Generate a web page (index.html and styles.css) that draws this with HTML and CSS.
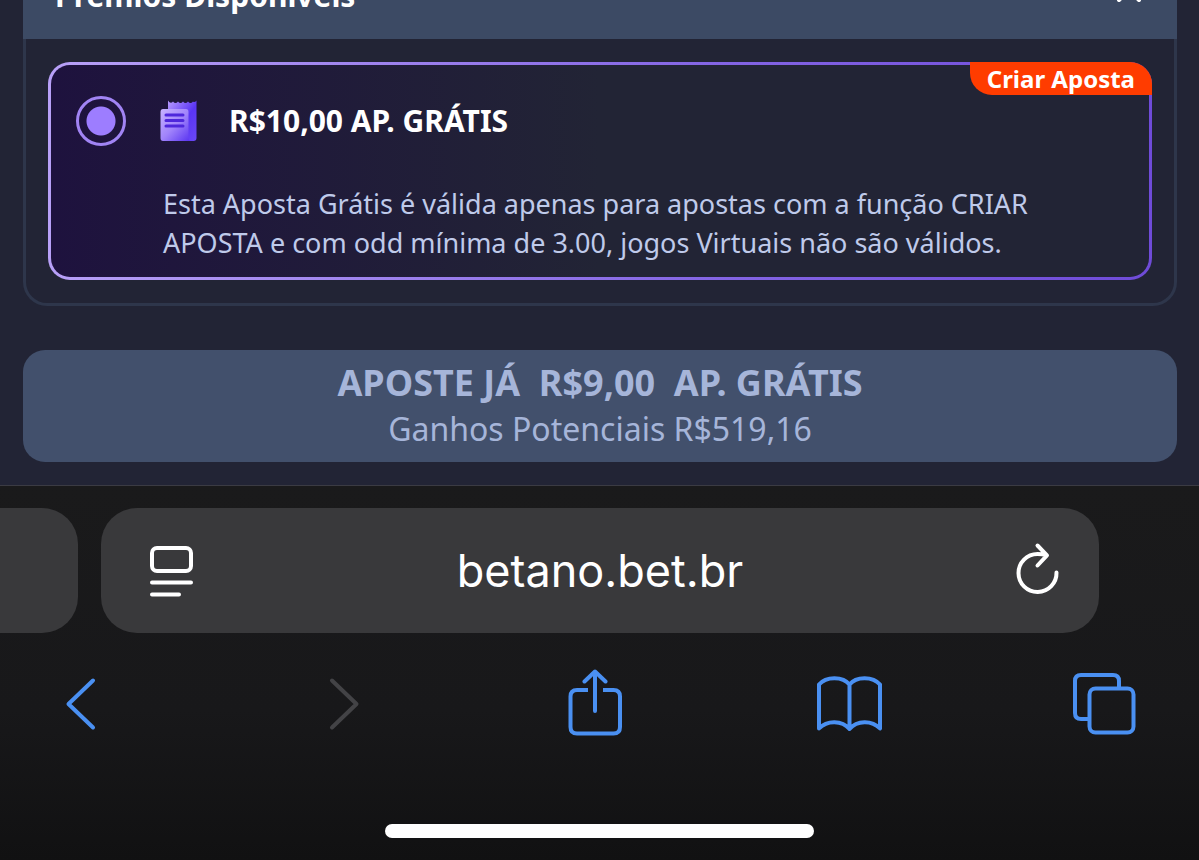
FILE: index.html
```html
<!DOCTYPE html>
<html lang="pt-BR">
<head>
<meta charset="utf-8">
<meta name="viewport" content="width=device-width, initial-scale=1">
<title>Betano</title>
<link rel="stylesheet" href="styles.css">
</head>
<body>
<main class="betslip">
  <section class="rewards">
    <header class="rewards-header">
      <h2 class="rewards-title">Prêmios Disponíveis</h2>
      <button class="collapse" type="button" aria-label="Recolher">
        <svg width="30" height="20" viewBox="0 0 30 20"><path d="M4 14 L14 4 L24 14"/></svg>
      </button>
    </header>
    <div class="rewards-body">
      <div class="reward">
        <span class="reward-tag">Criar Aposta</span>
        <div class="reward-top">
          <input class="reward-radio" type="radio" name="reward" id="reward-1" checked>
          <svg class="reward-icon" width="38" height="42" viewBox="0 0 38 42" aria-hidden="true">
            <defs>
              <linearGradient id="back" x1="0" y1="0" x2="1" y2="1"><stop offset="0" stop-color="#b89bff"/><stop offset=".55" stop-color="#5a35f4"/><stop offset="1" stop-color="#6a48f5"/></linearGradient>
              <linearGradient id="front" x1="0" y1="0" x2="1" y2="1"><stop offset="0" stop-color="#c7b3ff"/><stop offset=".5" stop-color="#a184fb"/><stop offset="1" stop-color="#5630f0"/></linearGradient>
            </defs>
            <path fill="url(#back)" d="M8 .5 Q10.500 4.500 13 1.500 Q15.500 4.500 18 1.500 Q20.500 4.500 23 1.500 Q25.500 4.500 28 1.500 Q30.500 4.500 33 1.500 Q34.500 3 36.500 .5 V38 Q36.500 41 33.500 41 H8 Z"/>
            <path fill="url(#front)" d="M3 9 H26 Q28.500 9 28.500 12 V38 Q28.500 41 31 41 H3 Q.5 41 .5 38 V12 Q.5 9 3 9 Z"/>
            <path stroke="#4e27dc" stroke-width="3" stroke-linecap="round" d="M6 15 H23 M6 20.500 H23 M6 26 H23"/>
          </svg>
          <label class="reward-name" for="reward-1">R$10,00 AP. GRÁTIS</label>
        </div>
        <p class="reward-text">Esta Aposta Grátis é válida apenas para apostas com a função CRIAR APOSTA e com odd mínima de 3.00, jogos Virtuais não são válidos.</p>
      </div>
    </div>
  </section>
  <button class="place-bet" type="button">
    <span class="place-bet-main">APOSTE JÁ&nbsp; R$9,00&nbsp; AP. GRÁTIS</span>
    <span class="place-bet-sub">Ganhos Potenciais R$519,16</span>
  </button>
</main>
<footer class="browser">
  <div class="tabs">
    <div class="tab-previous"></div>
    <div class="address">
      <button class="address-button" type="button" aria-label="Leitor">
        <svg width="60" height="60" viewBox="0 0 60 60"><rect x="15" y="7" width="39" height="23" rx="5"/><path d="M15 41.500 H54 M15 53.500 H42"/></svg>
      </button>
      <a class="address-url" href="#">betano.bet.br</a>
      <button class="address-button" type="button" aria-label="Recarregar">
        <svg width="60" height="60" viewBox="0 0 60 60"><path d="M53.500 31.500 A19 19 0 1 1 34.500 13 Q39 13 43.500 14 M34.500 4.500 L44 14.300 L34.500 24.500"/></svg>
      </button>
    </div>
  </div>
  <nav class="toolbar">
    <button class="tool" type="button" aria-label="Voltar"><svg viewBox="0 0 70 70"><path d="M47 11.500 L22.500 35 L47 58.500"/></svg></button>
    <button class="tool tool-off" type="button" disabled aria-label="Avançar"><svg viewBox="0 0 70 70"><path d="M30 11.500 L54.500 35 L30 58.500"/></svg></button>
    <button class="tool" type="button" aria-label="Compartilhar"><svg viewBox="0 0 70 70"><path stroke-linecap="butt" d="M30 21 H19 Q12.500 21 12.500 27.500 V58 Q12.500 64.500 19 64.500 H55.500 Q62 64.500 62 58 V27.500 Q62 21 55.500 21 H45"/><path d="M37 42 V2.500 M26.500 12.500 L37 2.500 L47.500 12.500"/></svg></button>
    <button class="tool" type="button" aria-label="Favoritos"><svg viewBox="0 0 70 70"><path d="M36.500 60 V15.500 C30 7 13 7 6 15.500 V59.500 C14 51 29 51 36.500 60 C44 51 59 51 67 59.500 V15.500 C60 7 43 7 36.500 15.500"/></svg></button>
    <button class="tool" type="button" aria-label="Abas"><svg viewBox="0 0 70 70"><path stroke-linecap="butt" d="M20.500 50 H12 Q6 50 6 44 V12 Q6 6 12 6 H44 Q50 6 50 12 V19.500"/><rect x="20.500" y="19.500" width="44" height="44" rx="6"/></svg></button>
  </nav>
  <div class="home-indicator"></div>
</footer>
</body>
</html>
```
FILE: styles.css
```css
* { box-sizing: border-box; }

body {
  margin: 0;
  min-height: 100vh;
  display: flex;
  flex-direction: column;
  overflow: hidden;
  background: #18181a;
  font-family: "Noto Sans", "Open Sans", sans-serif;
}

button {
  border: 0;
  padding: 0;
  background: none;
  font: inherit;
}

svg { display: block; fill: none; }

.betslip {
  padding: 0 22px 23px 23px;
  background: #222435;
  border-bottom: 1px solid #3b3b43;
}

/* The list is scrolled, so the header is partly above the window. */
.rewards { margin-top: -48px; }

.rewards-header {
  height: 87px;
  padding: 0 32px;
  display: flex;
  align-items: center;
  justify-content: space-between;
  background: #3c4a64;
}

.rewards-title {
  margin: 0;
  color: #fff;
  font-size: 30px;
  line-height: 40px;
}

.collapse svg { stroke: #fff; stroke-width: 4; stroke-linecap: round; }

.rewards-body {
  padding: 23px 22px;
  border: 3px solid #2e364b;
  border-top: 0;
  border-radius: 0 0 24px 24px;
}

.reward {
  position: relative;
  padding: 31px 60px 15px 25px;
  border: 3px solid transparent;
  border-radius: 22px;
  background:
    linear-gradient(90deg, #1e123e, #222435 50%) padding-box,
    linear-gradient(90deg, #b8a0f8, #8465e4 60%, #6f4bd8) border-box;
}

.reward-tag {
  position: absolute;
  top: -3px;
  right: -3px;
  padding: 0 17px;
  border-radius: 0 22px 0 22px;
  background: #ff3c00;
  color: #fff;
  font-size: 24px;
  font-weight: 700;
  line-height: 33px;
}

.reward-top {
  display: flex;
  align-items: center;
  margin-bottom: 38px;
}

.reward-radio {
  appearance: none;
  width: 50px;
  height: 50px;
  margin: 0 34px 0 0;
  border: 3px solid #a184f4;
  border-radius: 50%;
  background: radial-gradient(circle, #9d7dff 14px, transparent 15px);
}

.reward-icon { margin-right: 31px; }

.reward-name {
  color: #fff;
  font-size: 30px;
  font-weight: 700;
  line-height: 40px;
}

.reward-text {
  margin: 0 0 0 87px;
  color: #bfcaea;
  font-size: 27px;
  line-height: 39px;
}

.place-bet {
  width: 100%;
  height: 112px;
  margin-top: 44px;
  display: flex;
  flex-direction: column;
  align-items: center;
  justify-content: center;
  border-radius: 22px;
  background: #42506c;
  color: #a6b5d9;
}

.place-bet-main {
  font-size: 36px;
  font-weight: 700;
  line-height: 46px;
}

.place-bet-sub {
  font-size: 32px;
  line-height: 46px;
}

.browser {
  flex: 1;
  display: flex;
  flex-direction: column;
  padding: 22px 0;
  background: linear-gradient(#1a1a1b, #18181a 60%, #111112);
}

.tabs {
  display: grid;
  grid-template-columns: 78px 1fr;
  gap: 23px;
  padding-right: 100px;
}

.tab-previous {
  border-radius: 0 36px 36px 0;
  background: #39393b;
}

.address {
  height: 125px;
  padding: 0 36px;
  display: flex;
  align-items: center;
  justify-content: space-between;
  border-radius: 36px;
  background: #39393b;
}

.address-button svg {
  stroke: #fff;
  stroke-width: 4;
  stroke-linecap: round;
  stroke-linejoin: round;
}

.address-url {
  color: #fff;
  font-family: Inter, "Liberation Sans", sans-serif;
  font-size: 45px;
  line-height: 60px;
  text-decoration: none;
}

.toolbar {
  display: flex;
  justify-content: space-between;
  padding: 36px 60px 0 46px;
}

.tool svg {
  width: 70px;
  height: 70px;
  stroke: #4a90f2;
  stroke-width: 4;
  stroke-linecap: round;
  stroke-linejoin: round;
}

.tool-off svg { stroke: #434346; }

.home-indicator {
  width: 429px;
  height: 14px;
  margin: auto auto 0;
  border-radius: 7px;
  background: #fff;
}
```
